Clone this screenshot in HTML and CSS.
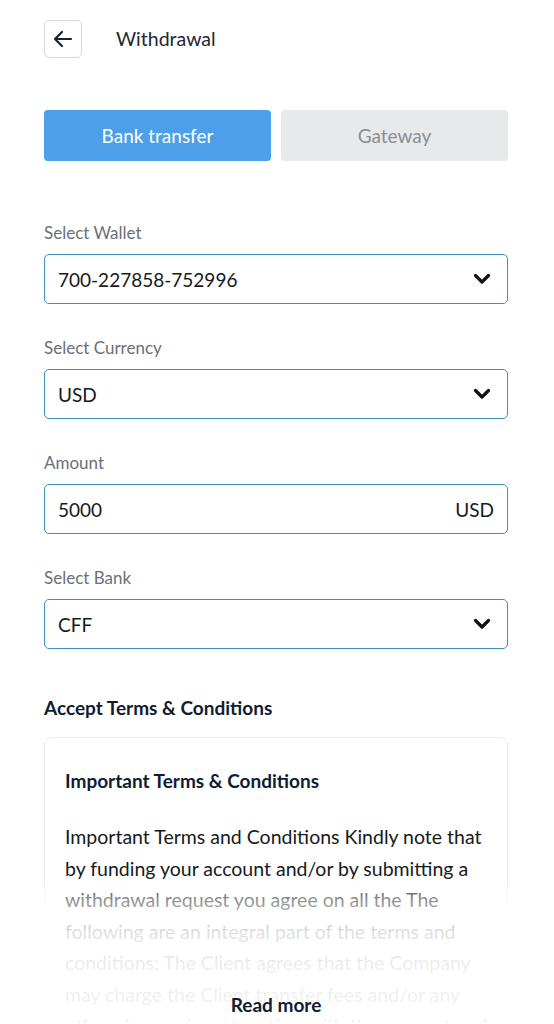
FILE: index.html
```html
<!DOCTYPE html>
<html>
<head>
<meta charset="utf-8">
<link rel="stylesheet" href="styles.css">
</head>
<body>
<div class="page">
  <header class="topbar">
    <button class="back" aria-label="Back">
      <svg width="24" height="24" viewBox="0 0 24 24" fill="none" stroke="#1b2333" stroke-width="2.2" stroke-linecap="round" stroke-linejoin="round"><path d="M20 12H4.5M11 5l-7 7 7 7"/></svg>
    </button>
    <h1 class="title">Withdrawal</h1>
  </header>

  <div class="tabs">
    <div class="tab tab-active">Bank transfer</div>
    <div class="tab">Gateway</div>
  </div>

  <div class="fields">
    <div class="field">
      <label class="label">Select Wallet</label>
      <div class="input"><span>700-227858-752996</span><svg class="chev" width="18" height="12" viewBox="0 0 18 12"><path d="M2.5 2.5l6.5 6.5 6.5-6.5" fill="none" stroke="#111" stroke-width="3.2" stroke-linecap="round" stroke-linejoin="round"/></svg></div>
    </div>
    <div class="field">
      <label class="label">Select Currency</label>
      <div class="input"><span>USD</span><svg class="chev" width="18" height="12" viewBox="0 0 18 12"><path d="M2.5 2.5l6.5 6.5 6.5-6.5" fill="none" stroke="#111" stroke-width="3.2" stroke-linecap="round" stroke-linejoin="round"/></svg></div>
    </div>
    <div class="field">
      <label class="label">Amount</label>
      <div class="input"><span>5000</span><span class="suffix">USD</span></div>
    </div>
    <div class="field">
      <label class="label">Select Bank</label>
      <div class="input"><span>CFF</span><svg class="chev" width="18" height="12" viewBox="0 0 18 12"><path d="M2.5 2.5l6.5 6.5 6.5-6.5" fill="none" stroke="#111" stroke-width="3.2" stroke-linecap="round" stroke-linejoin="round"/></svg></div>
    </div>
  </div>

  <h2 class="section">Accept Terms &amp; Conditions</h2>
  <div class="card">
    <h3 class="card-title">Important Terms &amp; Conditions</h3>
    <p class="card-text">Important Terms and Conditions Kindly note that by funding your account and/or by submitting a withdrawal request you agree on all the The following are an integral part of the terms and conditions: The Client agrees that the Company may charge the Client transfer fees and/or any other charges in connection with the account and the transfers made.</p>
    <div class="fade"></div>
    <div class="readmore">Read more</div>
  </div>
</div>
</body>
</html>
```
FILE: styles.css
```css
* { box-sizing: border-box; }
html, body { margin: 0; padding: 0; background: #fff; }
body {
  font-family: "Lato", "Noto Sans", sans-serif;
  color: #1b2333;
  height: 1024px;
  overflow: hidden;
}
.page { padding: 20px 46px 0 44px; }
.topbar { display: flex; align-items: center; height: 38px; }
.back {
  width: 38px; height: 38px;
  border: 1px solid #d6d8dc; border-radius: 5px;
  background: #fff; padding: 0;
  display: flex; align-items: center; justify-content: center;
}
.title { margin: -2px 0 0 34px; font-size: 19.5px; font-weight: 400; color: #1f2733; }
.tabs { display: flex; gap: 10px; margin-top: 52px; }
.tab {
  flex: 1; height: 51px; border-radius: 4px;
  background: #e8e9eb; color: #8b8f95;
  display: flex; align-items: center; justify-content: center;
  font-size: 19px;
}
.tab-active { background: #4c9fe8; color: #fff; }
.fields { display: flex; flex-direction: column; gap: 33px; margin-top: 61px; }
.field { display: flex; flex-direction: column; }
.label { font-size: 17px; color: #6b7078; line-height: 22px; margin-bottom: 10px; }
.input {
  height: 50px; border: 1.5px solid #3e90b8; border-radius: 5px;
  display: flex; align-items: center; justify-content: space-between;
  padding: 0 16px 0 13px;
  font-size: 19px; color: #161a20;
}
.suffix { margin-right: -3px; }
.section { margin: 46px 0 0; font-size: 19px; font-weight: 700; color: #0f1d33; line-height: 26px; }
.card {
  position: relative; margin-top: 16px;
  border-radius: 6px;
  padding: 30px 20px 0 21px; height: 286px; overflow: hidden;
}
.card::before {
  content: ""; position: absolute; left: 0; right: 0; top: 0; height: 400px;
  border: 1px solid #e9eaec; border-radius: 6px;
  -webkit-mask-image: linear-gradient(to bottom, #000 0, #000 140px, transparent 185px);
  mask-image: linear-gradient(to bottom, #000 0, #000 140px, transparent 185px);
}
.card-title { margin: 0; font-size: 19px; font-weight: 700; color: #0f1d33; line-height: 28px; }
.card-text { position: relative; margin: 26px 0 0; font-size: 19.5px; line-height: 31.5px; color: #161a20; }
.fade {
  position: absolute; left: 0; right: 0; top: 140px; bottom: 0;
  background: linear-gradient(to bottom, rgba(255,255,255,0) 0px, rgba(255,255,255,0.5) 22px, rgba(255,255,255,0.86) 55px, rgba(255,255,255,0.92) 90px, rgba(255,255,255,0.94) 100%);
}
.readmore {
  position: absolute; left: 0; right: 0; top: 256px;
  text-align: center; font-size: 19px; font-weight: 700; color: #0f1d33;
}
```
